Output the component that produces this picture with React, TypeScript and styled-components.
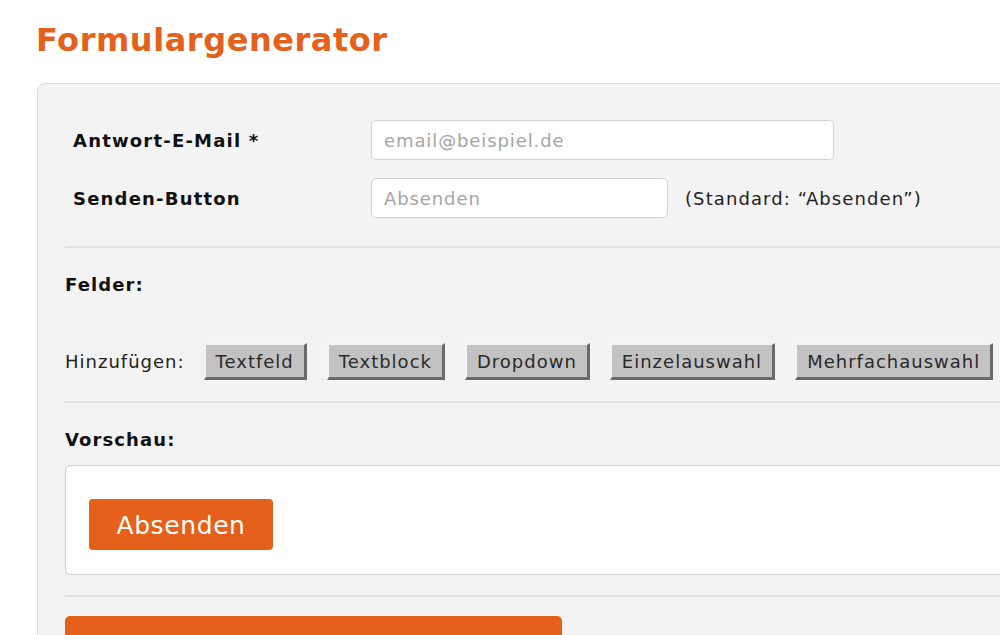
import styled, { createGlobalStyle } from "styled-components";

const GlobalStyle = createGlobalStyle`
  html, body {
    margin: 0;
    padding: 0;
    background: #ffffff;
    overflow: hidden;
  }
  body {
    font-family: "DejaVu Sans", Verdana, sans-serif;
    color: #111;
  }
`;

const ORANGE = "#e5601a";

const Page = styled.div`
  padding: 22px 0 0 37px;
  width: 1100px;
`;

const Title = styled.h1`
  margin: 0 0 0 -1px;
  font-size: 32px;
  line-height: 36px;
  font-weight: bold;
  color: ${ORANGE};
  letter-spacing: 0.55px;
`;

const Panel = styled.div`
  margin-top: 25px;
  background: #f3f3f3;
  border: 1px solid #dcdcdc;
  border-radius: 8px;
  padding: 0 0 40px 27px;
`;

const Section = styled.div<{ $top: number; $bottom: number; $last?: boolean }>`
  padding-top: ${({ $top }) => $top}px;
  padding-bottom: ${({ $bottom }) => $bottom}px;
  border-bottom: ${({ $last }) => ($last ? "none" : "2px solid #e2e2e2")};
`;

const SettingsGrid = styled.div`
  display: grid;
  grid-template-columns: 298px auto;
  row-gap: 18px;
  padding-left: 8px;
  align-items: center;
`;

const Label = styled.div`
  font-size: 18px;
  font-weight: bold;
  letter-spacing: 1.2px;
`;

const FieldWrap = styled.div`
  display: flex;
  align-items: center;
  gap: 17px;
`;

const TextInput = styled.input<{ $width: number }>`
  box-sizing: border-box;
  width: ${({ $width }) => $width}px;
  height: 40px;
  border: 1px solid #d2d2d2;
  border-radius: 5px;
  background: #fff;
  padding: 0 12px;
  font-family: inherit;
  font-size: 18px;
  letter-spacing: 0.9px;
  color: #333;
  outline: none;
  &::placeholder {
    color: #a5a5a5;
  }
`;

const Hint = styled.span`
  font-size: 18px;
  letter-spacing: 1.1px;
  color: #222;
`;

const Heading = styled.div`
  font-size: 18px;
  line-height: 20px;
  font-weight: bold;
  letter-spacing: 1.1px;
`;

const AddRow = styled.div`
  margin-top: 48px;
  display: flex;
  align-items: center;
  gap: 20px;
`;

const AddLabel = styled.span`
  font-size: 18px;
  letter-spacing: 1px;
  color: #222;
  margin-right: -1px;
`;

const AddButton = styled.button`
  height: 37px;
  padding: 0 10px;
  background: #c2c2c2;
  border-width: 2px 3px 3px 2px;
  border-style: solid;
  border-color: #f4f4f4 #6a6a6a #6a6a6a #f4f4f4;
  font-family: inherit;
  font-size: 18px;
  letter-spacing: 1px;
  color: #2a2a2a;
  white-space: nowrap;
  cursor: pointer;
`;

const PreviewBox = styled.div`
  margin-top: 15px;
  height: 110px;
  box-sizing: border-box;
  background: #fff;
  border: 1px solid #cfcfcf;
  border-radius: 5px;
  padding: 33px 0 0 23px;
`;

const SubmitButton = styled.button`
  width: 184px;
  height: 51px;
  padding-top: 3px;
  background: ${ORANGE};
  border: none;
  border-radius: 4px;
  color: #fff;
  font-family: inherit;
  font-size: 25px;
  letter-spacing: 0.6px;
  cursor: pointer;
`;

const GenerateButton = styled.button`
  width: 497px;
  height: 52px;
  background: ${ORANGE};
  border: none;
  border-radius: 5px;
`;

const fieldTypes = ["Textfeld", "Textblock", "Dropdown", "Einzelauswahl", "Mehrfachauswahl"];

export default function App() {
  return (
    <>
      <GlobalStyle />
      <Page>
        <Title>Formulargenerator</Title>
        <Panel>
          <Section $top={36} $bottom={28}>
            <SettingsGrid>
              <Label>Antwort-E-Mail *</Label>
              <TextInput $width={463} placeholder="email@beispiel.de" />
              <Label>Senden-Button</Label>
              <FieldWrap>
                <TextInput $width={297} placeholder="Absenden" />
                <Hint>(Standard: “Absenden”)</Hint>
              </FieldWrap>
            </SettingsGrid>
          </Section>
          <Section $top={27} $bottom={21}>
            <Heading>Felder:</Heading>
            <AddRow>
              <AddLabel>Hinzufügen:</AddLabel>
              {fieldTypes.map((t) => (
                <AddButton key={t}>{t}</AddButton>
              ))}
            </AddRow>
          </Section>
          <Section $top={27} $bottom={20}>
            <Heading>Vorschau:</Heading>
            <PreviewBox>
              <SubmitButton>Absenden</SubmitButton>
            </PreviewBox>
          </Section>
          <Section $top={19} $bottom={0} $last>
            <GenerateButton />
          </Section>
        </Panel>
      </Page>
    </>
  );
}
